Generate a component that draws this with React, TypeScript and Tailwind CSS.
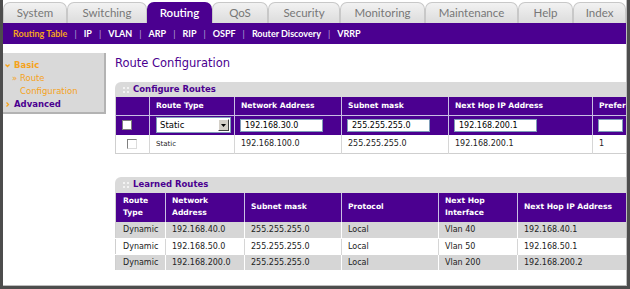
import React from "react";

const tabs = [
  { label: "System", w: "w-[64px]" },
  { label: "Switching", w: "w-[80px]" },
  { label: "Routing", w: "w-[65px]", active: true },
  { label: "QoS", w: "w-[56px]" },
  { label: "Security", w: "w-[72px]" },
  { label: "Monitoring", w: "w-[85px]" },
  { label: "Maintenance", w: "w-[93px]" },
  { label: "Help", w: "w-[55px]" },
  { label: "Index", w: "w-[53px]" },
];

const subnav = ["Routing Table", "IP", "VLAN", "ARP", "RIP", "OSPF", "Router Discovery", "VRRP"];

const learned = [
  ["Dynamic", "192.168.40.0", "255.255.255.0", "Local", "Vlan 40", "192.168.40.1"],
  ["Dynamic", "192.168.50.0", "255.255.255.0", "Local", "Vlan 50", "192.168.50.1"],
  ["Dynamic", "192.168.200.0", "255.255.255.0", "Local", "Vlan 200", "192.168.200.2"],
];

// little grip dots in the panel headers
function Grip() {
  return (
    <svg width="6" height="6" viewBox="0 0 6 6" className="shrink-0">
      <rect x="0" y="0" width="2" height="2" fill="#f3f3f3" />
      <rect x="4" y="0" width="2" height="2" fill="#f3f3f3" />
      <rect x="0" y="4" width="2" height="2" fill="#f3f3f3" />
      <rect x="4" y="4" width="2" height="2" fill="#f3f3f3" />
    </svg>
  );
}

function Chevron({ down }: { down?: boolean }) {
  return (
    <svg width="5" height="5" viewBox="0 0 5 5" className="shrink-0">
      <path
        d={down ? "M0.5 1.5L2.5 3.5L4.5 1.5" : "M1.5 0.5L3.5 2.5L1.5 4.5"}
        fill="none"
        stroke="#f5a31c"
        strokeWidth="1.3"
      />
    </svg>
  );
}

function PanelHeader({ title, h }: { title: string; h: string }) {
  return (
    <div className={`${h} bg-[#dadada] rounded-tl-[6px] flex items-center pl-[8px] gap-[4px]`}>
      <Grip />
      <span className="text-[8.5px] font-bold text-[#4b0090]">{title}</span>
    </div>
  );
}

function Input({ value, w }: { value: string; w: string }) {
  return (
    <div className={`${w} h-[13px] bg-white border border-[#7f9db9] text-[8px] leading-[11px] pl-[4px] text-black`}>
      {value}
    </div>
  );
}

export default function App() {
  return (
    <div className="w-[630px] h-[289px] overflow-hidden bg-white border-l-[3px] border-r-[3px] border-b-[3px] border-[#4d4d4d]">
      <div
        className="h-full flex flex-col overflow-hidden border-r border-b border-[#bdbdbd]"
        style={{ fontFamily: '"DejaVu Sans", Verdana, sans-serif' }}
      >
        {/* Top tabs */}
        <div className="h-[23px] shrink-0 flex items-end" style={{ fontFamily: "Lato, sans-serif" }}>
          {tabs.map((t) => (
            <div
              key={t.label}
              className={`${t.w} shrink-0 h-[21px] rounded-t-[7px] flex items-center justify-center text-[11.5px] ${
                t.active
                  ? "bg-[#4b0090] text-white font-semibold"
                  : "bg-gradient-to-b from-[#f2f2f2] to-[#dcdcdc] border border-b-0 border-[#c8c8c8] text-[#777]"
              }`}
            >
              {t.label}
            </div>
          ))}
        </div>

        {/* Sub navigation */}
        <div
          className="h-[21px] shrink-0 bg-[#4b0090] flex items-center pl-[10px] text-[9px] font-bold text-white"
          style={{ fontFamily: "Lato, sans-serif" }}
        >
          {subnav.map((s, i) => (
            <React.Fragment key={s}>
              {i > 0 && <span className="mx-[7px] font-normal text-[#b8a6d8]">|</span>}
              <span className={i === 0 ? "text-[#f5a31c]" : ""}>{s}</span>
            </React.Fragment>
          ))}
        </div>

        <div className="flex flex-1 min-h-0">
          {/* Left menu */}
          <div className="w-[103px] shrink-0 mt-[9px] self-start h-[61px] bg-[#d9d9d9] border-r-2 border-b-2 border-[#b3b3b3] pt-[6px] text-[8.5px] leading-[13px]">
            <div className="flex items-center gap-[4px] pl-[2px]">
              <Chevron down />
              <span className="font-bold text-[#f5a31c]">Basic</span>
            </div>
            <div className="pl-[9px] text-[#f5a31c]">» Route</div>
            <div className="pl-[17px] text-[#f5a31c]">Configuration</div>
            <div className="flex items-center gap-[4px] pl-[2px]">
              <Chevron />
              <span className="font-bold text-[#4b0090]">Advanced</span>
            </div>
          </div>

          {/* Main content */}
          <div className="flex-1 min-w-0 overflow-hidden pl-[9px]">
            <h1 className="pt-[12px] mb-[12px] text-[11.5px] leading-[14px] text-[#4b0090]">Route Configuration</h1>

            {/* Configure Routes */}
            <div className="w-[560px]">
              <PanelHeader title="Configure Routes" h="h-[15px]" />
              <table className="table-fixed w-[537px] border-l border-[#cfcfcf]">
                <colgroup>
                  <col className="w-[34px]" />
                  <col className="w-[85px]" />
                  <col className="w-[107px]" />
                  <col className="w-[107px]" />
                  <col className="w-[144px]" />
                  <col className="w-[60px]" />
                </colgroup>
                <thead>
                  <tr className="h-[18px] bg-[#4b0090] text-white text-[7.6px] font-bold text-left">
                    <th className="border-r border-[#c9bfe3]"></th>
                    <th className="pl-[6px] border-r border-[#c9bfe3]">Route Type</th>
                    <th className="pl-[6px] border-r border-[#c9bfe3]">Network Address</th>
                    <th className="pl-[6px] border-r border-[#c9bfe3]">Subnet mask</th>
                    <th className="pl-[6px] border-r border-[#c9bfe3]">Next Hop IP Address</th>
                    <th className="pl-[6px]">Preference</th>
                  </tr>
                </thead>
                <tbody>
                  <tr className="h-[20px] bg-[#4b0090] border-t border-[#c9bfe3]">
                    <td className="pl-[6px] border-r border-[#c9bfe3]">
                      <div className="w-[10px] h-[10px] bg-white border border-[#7f7f7f]" />
                    </td>
                    <td className="pl-[6px] border-r border-[#c9bfe3]">
                      <div className="w-[75px] h-[16px] bg-white border border-[#7f9db9] flex items-center justify-between pl-[3px] pr-px">
                        <span className="text-[8.5px] text-black">Static</span>
                        <span className="w-[11px] h-[12px] bg-[#d4d0c8] border border-t-white border-l-white border-r-[#404040] border-b-[#404040] flex items-center justify-center">
                          <svg width="5" height="3" viewBox="0 0 5 3">
                            <path d="M0 0H5L2.5 3Z" fill="#000" />
                          </svg>
                        </span>
                      </div>
                    </td>
                    <td className="pl-[5px] border-r border-[#c9bfe3]">
                      <Input value="192.168.30.0" w="w-[83px]" />
                    </td>
                    <td className="pl-[5px] border-r border-[#c9bfe3]">
                      <Input value="255.255.255.0" w="w-[83px]" />
                    </td>
                    <td className="pl-[5px] border-r border-[#c9bfe3]">
                      <Input value="192.168.200.1" w="w-[83px]" />
                    </td>
                    <td className="pl-[5px]">
                      <Input value="" w="w-[25px]" />
                    </td>
                  </tr>
                  <tr className="h-[18px] bg-white text-[8px] text-[#222] border-b border-[#cfcfcf]">
                    <td className="pl-[11px] border-r border-[#d6d6d6]">
                      <div className="w-[10px] h-[10px] bg-white border border-t-[#808080] border-l-[#808080] border-r-[#dcdcdc] border-b-[#dcdcdc]" />
                    </td>
                    <td className="pl-[6px] border-r border-[#d6d6d6] text-[7px]">Static</td>
                    <td className="pl-[6px] border-r border-[#d6d6d6]">192.168.100.0</td>
                    <td className="pl-[6px] border-r border-[#d6d6d6]">255.255.255.0</td>
                    <td className="pl-[6px] border-r border-[#d6d6d6]">192.168.200.1</td>
                    <td className="pl-[6px]">1</td>
                  </tr>
                </tbody>
              </table>
            </div>

            {/* Learned Routes */}
            <div className="w-[560px] mt-[23px]">
              <PanelHeader title="Learned Routes" h="h-[16px]" />
              <table className="table-fixed w-[512px] border-l border-[#cfcfcf]">
                <colgroup>
                  <col className="w-[50px]" />
                  <col className="w-[79px]" />
                  <col className="w-[97px]" />
                  <col className="w-[97px]" />
                  <col className="w-[79px]" />
                  <col className="w-[110px]" />
                </colgroup>
                <thead>
                  <tr className="h-[29px] bg-[#4b0090] text-white text-[7.6px] font-bold text-left leading-[12px]">
                    <th className="pl-[7px] border-r border-[#c9bfe3]">Route<br />Type</th>
                    <th className="pl-[6px] border-r border-[#c9bfe3]">Network<br />Address</th>
                    <th className="pl-[6px] border-r border-[#c9bfe3]">Subnet mask</th>
                    <th className="pl-[6px] border-r border-[#c9bfe3]">Protocol</th>
                    <th className="pl-[6px] border-r border-[#c9bfe3]">Next Hop<br />Interface</th>
                    <th className="pl-[6px]">Next Hop IP Address</th>
                  </tr>
                </thead>
                <tbody className="text-[8px] text-[#222]">
                  {learned.map((r, i) => (
                    <tr
                      key={r[1]}
                      className={`${i === 0 ? "h-[17px]" : "h-[16px]"} ${
                        i === 1 ? "bg-white" : "bg-[#d6d6d6]"
                      } border-b border-white`}
                    >
                      {r.map((c, j) => (
                        <td
                          key={j}
                          className={`${j === 0 ? "pl-[7px]" : "pl-[6px]"} ${
                            i === 1 ? "border-r border-[#d6d6d6]" : "border-r border-white"
                          }`}
                        >
                          {c}
                        </td>
                      ))}
                    </tr>
                  ))}
                </tbody>
              </table>
            </div>
          </div>
        </div>
      </div>
    </div>
  );
}
